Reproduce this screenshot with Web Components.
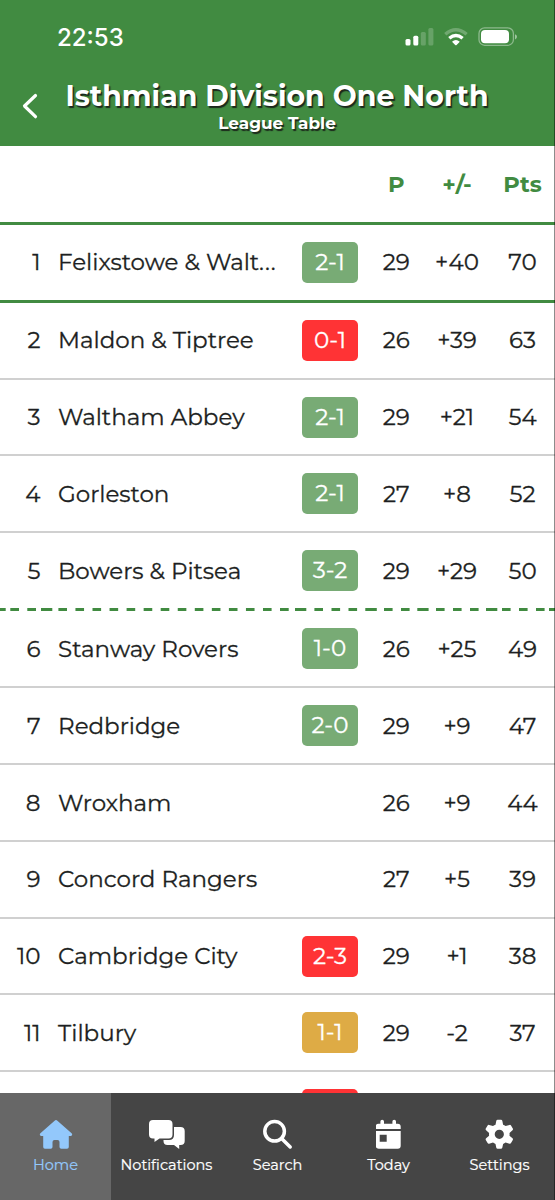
<!DOCTYPE html>
<html lang="en">
<head>
<meta charset="utf-8">
<title>Isthmian Division One North</title>
<style>
    body {
        margin: 0;
        font-family: Montserrat, Inter, "Open Sans", sans-serif;
    }
</style>
</head>
<body>
<league-app></league-app>

<script>
class StatusBar extends HTMLElement {
    constructor() {
        super();
        this.attachShadow({ mode: 'open' }).innerHTML = `
            <style>
                :host {
                    display: flex;
                    align-items: center;
                    justify-content: space-between;
                    height: 74px;
                    padding: 0 38px 0 57px;
                    font-size: 24px;
                    font-weight: 500;
                    font-family: Inter, sans-serif;
                }
                svg { display: block; }
            </style>
            <span>22:53</span>
            <svg width="112" height="20" viewBox="405 27 112 20" fill="#fff">
                <rect x="405.5" y="39" width="5" height="6.5" rx="1.5"/>
                <rect x="413.3" y="35.7" width="5" height="9.8" rx="1.5"/>
                <g opacity=".2">
                    <rect x="420.8" y="32" width="5" height="13.5" rx="1.5"/>
                    <rect x="428.4" y="28" width="5" height="17.5" rx="1.5"/>
                </g>
                <g fill="none" stroke="#fff" stroke-width="3.4">
                    <path d="M445.3 34.2Q455.8 25.2 466.6 34.2" opacity=".25"/>
                    <path d="M449.3 38.2Q455.9 32.6 462.6 38.2"/>
                </g>
                <path d="M452 41.7q3.9-3.2 7.8 0l-3.2 3.2q-.7.7-1.4 0z"/>
                <rect x="479" y="27.9" width="34.4" height="17.4" rx="5.6" fill="none" stroke="#fff" stroke-width="1.3" opacity=".4"/>
                <rect x="481" y="30" width="28" height="13.3" rx="4"/>
                <path d="M515 34.2q2 .7 2 2.6t-2 2.6z" opacity=".5"/>
            </svg>
        `;
    }
}
customElements.define('status-bar', StatusBar);

class PageHeader extends HTMLElement {
    constructor() {
        super();
        this.attachShadow({ mode: 'open' }).innerHTML = `
            <style>
                :host {
                    display: block;
                    height: 146px;
                    color: #fff;
                    background: #418b41;
                }
                .bar { display: flex; }
                .back { width: 57px; }
                .back svg { display: block; margin: 18px 0 0 21px; }
                .titles {
                    width: 440px;
                    font-weight: 700;
                    text-align: center;
                    white-space: nowrap;
                    text-shadow: 1.5px 1.5px 1px #1c281c;
                }
                .title { font-size: 28.4px; line-height: 44px; }
                .sub { font-size: 16.9px; line-height: 11px; }
            </style>
            <status-bar></status-bar>
            <div class="bar">
                <div class="back">
                    <svg width="18" height="28" viewBox="0 0 18 28" fill="none" stroke="#fff" stroke-width="3.2" stroke-linecap="round" stroke-linejoin="round">
                        <path d="M14.5 3.5 3.5 14l11 10.7"/>
                    </svg>
                </div>
                <div class="titles">
                    <div class="title">Isthmian Division One North</div>
                    <div class="sub">League Table</div>
                </div>
            </div>
        `;
    }
}
customElements.define('page-header', PageHeader);

const GRID = '40.5px 261.5px 56px 76.5px 45px 75.5px';

class TableHead extends HTMLElement {
    constructor() {
        super();
        this.attachShadow({ mode: 'open' }).innerHTML = `
            <style>
                :host {
                    display: grid;
                    grid-template-columns: ${GRID};
                    align-items: center;
                    height: 76px;
                    color: #418b41;
                    font-size: 22.6px;
                    font-weight: 700;
                    text-align: center;
                    border-bottom: 3px solid #418b41;
                }
                .p { grid-column: 4; }
                .pts { padding-left: 10.5px; }
            </style>
            <div class="p">P</div>
            <div>+/-</div>
            <div class="pts">Pts</div>
        `;
    }
}
customElements.define('table-head', TableHead);

const DASHES = `
    <svg class="dashes" width="555" height="3" stroke="#418b41" stroke-width="3">
        <path d="M0 1.5h5.7M10.3 1.5H19M27.3 1.5H36M41 1.5H52.3"/>
        <path d="M58.4 1.5H272" stroke-dasharray="8.6 8.45"/>
        <path d="M280 1.5h8.7M295 1.5h11.3M314.4 1.5h8.6M331.5 1.5h8.6M348.5 1.5h8.6M365.3 1.5h11.5M384 1.5h8.6M401 1.5h8.6M417.3 1.5h11.3M436 1.5h8.6M453 1.5h8.6M470 1.5h8.6M486 1.5h11.3M502 1.5h8.6M519 1.5h8.6M536 1.5h8.6M549 1.5h6"/>
    </svg>
`;

class TeamRow extends HTMLElement {
    constructor() {
        super();
        this.attachShadow({ mode: 'open' });
    }
    set team(t) {
        this.shadowRoot.innerHTML = `
            <style>
                :host {
                    display: flex;
                    flex-direction: column;
                    height: ${t.height}px;
                    color: #1d1f22;
                    font-size: 23px;
                    font-weight: 400;
                    -webkit-text-stroke: .3px currentColor;
                }
                .cells {
                    flex: 1;
                    display: grid;
                    grid-template-columns: ${GRID};
                    align-items: center;
                    text-align: center;
                    white-space: nowrap;
                }
                .cells > div { display: flex; justify-content: center; line-height: ${t.leading || 28}px; }
                .cells > .rank { justify-content: flex-end; }
                .cells > .name { justify-content: flex-start; padding-left: 17.5px; }
                .dots { letter-spacing: 1px; }
                .pts { padding-left: 10.5px; }
                .cells > .score {
                    height: 41px;
                    line-height: 41px;
                    border-radius: 5px;
                    color: #fff;
                }
                .win { background: #78ab75; }
                .loss { background: #ff3335; }
                .draw { background: #deab45; }
                .line { height: 2px; background: #d0d0d0; }
                .line.solid { height: 3px; background: #418b41; }
                .line.dashed { height: 3px; background: none; }
                .dashes { display: block; }
            </style>
            <div class="cells">
                <div class="rank">${t.rank}</div>
                <div class="name"><span>${t.name}</span></div>
                <div class="${t.score ? 'score ' + t.result : ''}">${t.score || ''}</div>
                <div>${t.played}</div>
                <div>${t.diff}</div>
                <div class="pts">${t.points}</div>
            </div>
            <div class="line ${t.line || ''}">${t.line === 'dashed' ? DASHES : ''}</div>
        `;
    }
}
customElements.define('team-row', TeamRow);

const teams = [
    { height: 78, leading: 27, rank: 1, name: 'Felixstowe &amp; Walt<span class="dots">...</span>', result: 'win', score: '2-1', played: 29, diff: '+40', points: 70, line: 'solid' },
    { height: 77, leading: 27, rank: 2, name: 'Maldon &amp; Tiptree', result: 'loss', score: '0-1', played: 26, diff: '+39', points: 63 },
    { height: 76, rank: 3, name: 'Waltham Abbey', result: 'win', score: '2-1', played: 29, diff: '+21', points: 54 },
    { height: 77, rank: 4, name: 'Gorleston', result: 'win', score: '2-1', played: 27, diff: '+8', points: 52 },
    { height: 78, rank: 5, name: 'Bowers &amp; Pitsea', result: 'win', score: '3-2', played: 29, diff: '+29', points: 50, line: 'dashed' },
    { height: 77, rank: 6, name: 'Stanway Rovers', result: 'win', score: '1-0', played: 26, diff: '+25', points: 49 },
    { height: 77, rank: 7, name: 'Redbridge', result: 'win', score: '2-0', played: 29, diff: '+9', points: 47 },
    { height: 77, rank: 8, name: 'Wroxham', played: 26, diff: '+9', points: 44 },
    { height: 77, leading: 27, rank: 9, name: 'Concord Rangers', played: 27, diff: '+5', points: 39 },
    { height: 76, rank: 10, name: 'Cambridge City', result: 'loss', score: '2-3', played: 29, diff: '+1', points: 38 },
    { height: 77, rank: 11, name: 'Tilbury', result: 'draw', score: '1-1', played: 29, diff: '-2', points: 37 },
];

class LeagueTable extends HTMLElement {
    constructor() {
        super();
        this.attachShadow({ mode: 'open' }).innerHTML = `
            <style>
                :host { display: block; background: #fff; overflow: hidden; }
                .next {
                    width: 56px;
                    height: 41px;
                    margin: 17px 0 0 302px;
                    border-radius: 5px;
                    background: #ff3335;
                }
            </style>
            <table-head></table-head>
            <div class="rows"></div>
            <div class="next"></div>
        `;
        const rows = this.shadowRoot.querySelector('.rows');
        teams.forEach(team => {
            const row = document.createElement('team-row');
            row.team = team;
            rows.append(row);
        });
    }
}
customElements.define('league-table', LeagueTable);

class TabItem extends HTMLElement {
    constructor() {
        super();
        this.attachShadow({ mode: 'open' }).innerHTML = `
            <style>
                :host {
                    display: flex;
                    flex-direction: column;
                    align-items: center;
                    padding-top: 24px;
                    color: #fff;
                    font-size: 14.5px;
                    line-height: 22px;
                    -webkit-text-stroke: .2px currentColor;
                }
                :host([active]) { color: #93c8fb; background: #676767; }
                .icon { height: 37px; }
            </style>
            <div class="icon"><slot name="icon"></slot></div>
            <slot></slot>
        `;
    }
}
customElements.define('tab-item', TabItem);

class TabBar extends HTMLElement {
    constructor() {
        super();
        this.attachShadow({ mode: 'open' }).innerHTML = `
            <style>
                :host {
                    display: grid;
                    grid-template-columns: repeat(5, 1fr);
                    height: 107px;
                    background: #454545;
                }
                svg { display: block; fill: currentColor; }
            </style>
            <tab-item active>
                <svg slot="icon" width="34" height="34" viewBox="-1 0 34 34">
                    <path d="M14.6 3.7q1.4-1.2 2.8 0L31.6 16.2q1 1 .4 2-.4.7-1.5.7H28.8V30q0 1.8-1.8 1.8H21.3q-1.8 0-1.8-1.8V25q0-2-2-2H14.5q-2 0-2 2V30q0 1.8-1.8 1.8H5q-1.8 0-1.8-1.8V18.9H1.5Q.4 18.9 0 18.2q-.6-1 .4-2z"/>
                </svg>
                Home
            </tab-item>
            <tab-item>
                <svg slot="icon" width="38" height="34" viewBox="0 0 38 34">
                    <path d="M5 3H20.5Q24.5 3 24.5 7V17.5Q24.5 21.5 20.5 21.5H11.5L6.5 25V21.5H5Q1 21.5 1 17.5V7Q1 3 5 3Z"/>
                    <path d="M26 10H32.5Q36.7 10 36.7 14V24Q36.7 28 32.5 28H31.2V32L26 28H19.5Q15.5 28 15.5 24V23H21Q26 23 26 18Z"/>
                </svg>
                Notifications
            </tab-item>
            <tab-item>
                <svg slot="icon" width="32" height="34" viewBox=".6 0 32 34">
                    <g fill="none" stroke="currentColor" stroke-width="3.5" stroke-linecap="round">
                        <circle cx="13.2" cy="14.3" r="9.8"/>
                        <path d="M20.2 21.4 28.8 30"/>
                    </g>
                </svg>
                Search
            </tab-item>
            <tab-item>
                <svg slot="icon" width="26" height="34" viewBox=".8 0 26 34">
                    <path d="M5.2 4.5a1.8 1.8 0 0 1 3.6 0V6.7H17.2V4.5a1.8 1.8 0 0 1 3.6 0V6.7H22.5Q25.5 6.7 25.5 9.7V12.1H.5V9.7Q.5 6.7 3.5 6.7H5.2Z"/>
                    <path fill-rule="evenodd" d="M.5 14H25.5V28.7Q25.5 31.7 22.5 31.7H3.5Q.5 31.7 .5 28.7ZM4.5 17.7V24.7H11.5V17.7Z"/>
                </svg>
                Today
            </tab-item>
            <tab-item>
                <svg slot="icon" width="32" height="34" viewBox="-15.3 -17.3 32 34">
                    <path fill-rule="evenodd" d="M-3-13.5Q-2.7-14.5-1.7-14.5H1.7Q2.7-14.5 3-13.5L3.8-9.6Q5-9.1 6.3-8.2L10.2-9.4Q11.2-9.7 11.7-8.8L13.5-5.7Q14-4.8 13.2-4L10.2-1.4Q10.4 0 10.2 1.4L13.2 4Q14 4.8 13.5 5.7L11.7 8.8Q11.2 9.7 10.2 9.4L6.3 8.2Q5 9.1 3.8 9.6L3 13.5Q2.7 14.5 1.7 14.5H-1.7Q-2.7 14.5-3 13.5L-3.8 9.6Q-5 9.1-6.3 8.2L-10.2 9.4Q-11.2 9.7-11.7 8.8L-13.5 5.7Q-14 4.8-13.2 4L-10.2 1.4Q-10.4 0-10.2-1.4L-13.2-4Q-14-4.8-13.5-5.7L-11.7-8.8Q-11.2-9.7-10.2-9.4L-6.3-8.2Q-5-9.1-3.8-9.6ZM0-4.6a4.6 4.6 0 1 0 0 9.2a4.6 4.6 0 1 0 0-9.2Z"/>
                </svg>
                Settings
            </tab-item>
        `;
    }
}
customElements.define('tab-bar', TabBar);

class LeagueApp extends HTMLElement {
    constructor() {
        super();
        this.attachShadow({ mode: 'open' }).innerHTML = `
            <style>
                :host {
                    display: grid;
                    grid-template-rows: 146px 947px 107px;
                    position: relative;
                    width: 555px;
                    height: 1200px;
                    overflow: hidden;
                }
                /* thin shade over the right screen edge */
                :host::after {
                    content: "";
                    position: absolute;
                    inset: 0 0 0 auto;
                    width: 1px;
                    background: rgba(0, 0, 0, .45);
                }
            </style>
            <page-header></page-header>
            <league-table></league-table>
            <tab-bar></tab-bar>
        `;
    }
}
customElements.define('league-app', LeagueApp);
</script>
</body>
</html>
